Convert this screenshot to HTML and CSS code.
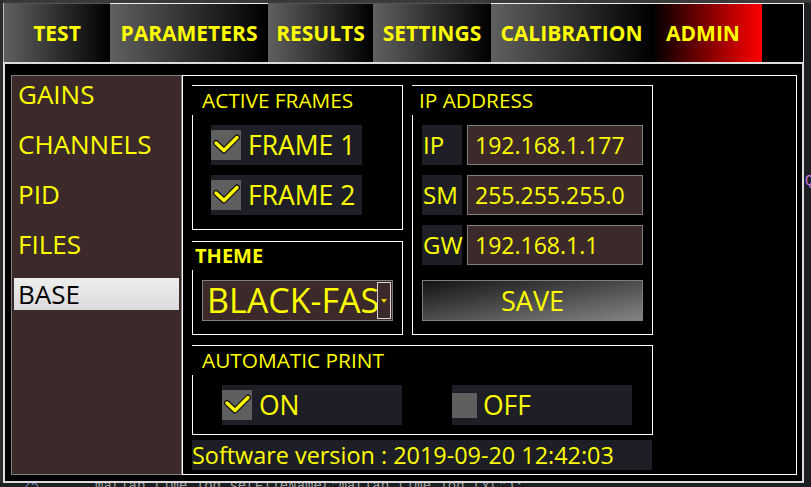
FILE: index.html
```html
<!DOCTYPE html>
<html lang="en">
<head>
    <meta charset="UTF-8">
    <meta name="viewport" content="width=device-width, initial-scale=1.0">
    <title>Settings - Base</title>
    <link rel="stylesheet" href="styles.css">
</head>
<body>
    <div class="desk">
        <div class="window">
            <div class="tabs">
                <div class="tab w-test">TEST</div>
                <div class="tab lit w-params">PARAMETERS</div>
                <div class="tab w-results">RESULTS</div>
                <div class="tab w-settings">SETTINGS</div>
                <div class="tab lit w-calib">CALIBRATION</div>
                <div class="tab tab-admin lit w-admin">ADMIN</div>
                <div class="tab-fill"></div>
            </div>

            <div class="frame">
                <ul class="menu">
                    <li>GAINS</li>
                    <li>CHANNELS</li>
                    <li>PID</li>
                    <li>FILES</li>
                    <li class="active">BASE</li>
                </ul>

                <div class="page">
                    <div class="grid">
                        <section class="group">
                            <div class="group-title">ACTIVE FRAMES</div>
                            <div class="frames">
                                <div class="check-row">
                                    <span class="box">
                                        <svg width="30" height="30" viewBox="0 0 30 30"><path class="tick-edge" d="M5 13 L13 20.5 L26 7.5"/><path class="tick" d="M5 13 L13 20.5 L26 7.5"/></svg>
                                    </span>
                                    <span>FRAME 1</span>
                                </div>
                                <div class="check-row">
                                    <span class="box">
                                        <svg width="30" height="30" viewBox="0 0 30 30"><path class="tick-edge" d="M5 13 L13 20.5 L26 7.5"/><path class="tick" d="M5 13 L13 20.5 L26 7.5"/></svg>
                                    </span>
                                    <span>FRAME 2</span>
                                </div>
                            </div>
                        </section>

                        <section class="group theme">
                            <div class="group-title">THEME</div>
                            <div class="select">
                                <span class="select-text">BLACK-FASHION</span>
                                <span class="select-btn"><span class="arrow"></span></span>
                            </div>
                        </section>

                        <section class="group ip">
                            <div class="group-title">IP ADDRESS</div>
                            <div class="ip-rows">
                                <div class="ip-row">
                                    <span class="ip-label">IP</span>
                                    <span class="ip-input">192.168.1.177</span>
                                </div>
                                <div class="ip-row">
                                    <span class="ip-label">SM</span>
                                    <span class="ip-input">255.255.255.0</span>
                                </div>
                                <div class="ip-row">
                                    <span class="ip-label">GW</span>
                                    <span class="ip-input">192.168.1.1</span>
                                </div>
                                <button class="save">SAVE</button>
                            </div>
                        </section>
                    </div>

                    <section class="group print">
                        <div class="group-title">AUTOMATIC PRINT</div>
                        <div class="print-rows">
                            <div class="check-row wide">
                                <span class="box">
                                    <svg width="30" height="30" viewBox="0 0 30 30"><path class="tick-edge" d="M5 13 L13 20.5 L26 7.5"/><path class="tick" d="M5 13 L13 20.5 L26 7.5"/></svg>
                                </span>
                                <span>ON</span>
                            </div>
                            <div class="check-row wide off">
                                <span class="box small"></span>
                                <span>OFF</span>
                            </div>
                        </div>
                    </section>

                    <div class="version">Software version : 2019-09-20 12:42:03</div>
                </div>
            </div>
        </div>
        <div class="side"><span>Q</span></div>
    </div>
    <div class="desk-line">
        <div class="code"><span class="ln">25</span>matlab_time_log.setFileName("matlab_time_log.txt");</div>
    </div>
</body>
</html>
```

FILE: styles.css
```css
* {
    box-sizing: border-box;
}
body {
    margin: 0;
    width: 811px;
    height: 487px;
    overflow: hidden;
    background: linear-gradient(#3a3a3a 3px, #1e1f25 3px);
    font-family: 'Open Sans', 'Noto Sans', sans-serif;
    color: #ffff00;
}
.desk {
    display: flex;
    padding: 3px 0 0 3px;
    background: linear-gradient(90deg, #2c2c2c 3px, transparent 3px);
}
.window {
    width: 801px;
    height: 480px;
    flex: none;
}
.side {
    flex: 1;
    padding: 170px 0 0 1px;
    font-family: 'Liberation Mono', monospace;
    font-size: 14px;
    color: #c678dd;
    overflow: hidden;
}

/* tab bar */
.tabs {
    display: flex;
    height: 59px;
    border-left: 1px solid #b8b8b8;
}
.tab {
    height: 59px;
    border-top: 1px solid #555;
    background: linear-gradient(90deg, #606060, #000);
    display: flex;
    align-items: center;
    justify-content: center;
    font-size: 21px;
    font-weight: 700;
    white-space: nowrap;
}
.tab.lit {
    border-top-color: #f0f0f0;
}
.tab-admin {
    background: linear-gradient(90deg, #000, #ff0000);
    padding-right: 8px;
}
.w-test { width: 106px; }
.w-params { width: 158px; }
.w-results { width: 105px; }
.w-settings { width: 118px; }
.w-calib { width: 161px; }
.w-admin { width: 110px; }
.tab-fill {
    flex: 1;
    background: #000;
    border-top: 1px solid #f0f0f0;
    border-right: 1px solid #f0f0f0;
}

/* main frame */
.frame {
    display: flex;
    height: 421px;
    background: #000;
    border: 2px solid #dcdcdc;
    padding: 11px 5px 6px 6px;
}
.menu {
    list-style: none;
    margin: 0;
    padding: 2px;
    width: 171px;
    height: 400px;
    background: #3c2a2a;
    border: 1px solid #808080;
}
.menu li {
    height: 32px;
    line-height: 32px;
    padding-left: 4px;
    margin-bottom: 18px;
    font-size: 26px;
}
.menu li.active {
    background: linear-gradient(#eeeeee, #dadada);
    color: #000;
}
.page {
    width: 615px;
    height: 400px;
    border: 1px solid #fff;
    padding: 9px;
}
.grid {
    display: grid;
    grid-template-columns: 211px 241px;
    grid-template-rows: 145px 94px;
    gap: 11px 9px;
}

/* group boxes */
.group {
    border: 1px solid #fff;
}
.group-title {
    margin-left: -1px;
    height: 29px;
    line-height: 29px;
    padding-left: 10px;
    background: #000;
    font-size: 20.8px;
    white-space: nowrap;
}
.frames {
    display: flex;
    flex-direction: column;
    gap: 10px;
    padding: 10px 0 0 18px;
}
.check-row {
    display: flex;
    align-items: center;
    gap: 7px;
    width: 151px;
    height: 40px;
    background: #1e1e26;
    font-size: 26.5px;
}
.check-row.wide {
    width: 180px;
}
.check-row.off {
    gap: 6px;
}
.box {
    width: 30px;
    height: 30px;
    flex: none;
    background: #5f5f5f;
}
.box svg {
    display: block;
}
.box.small {
    width: 25px;
    height: 25px;
}
.tick-edge {
    fill: none;
    stroke: #111;
    stroke-width: 6;
    stroke-linejoin: round;
    stroke-linecap: round;
}
.tick {
    fill: none;
    stroke: #ffff00;
    stroke-width: 3.5;
    stroke-linejoin: round;
    stroke-linecap: round;
}

/* theme */
.theme .group-title {
    height: 28px;
    line-height: 28px;
    padding-left: 3px;
    font-size: 20px;
    font-weight: 700;
}
.select {
    display: flex;
    align-items: center;
    width: 191px;
    height: 41px;
    margin: 10px 0 0 9px;
    padding-left: 4px;
    background: #3c2a2a;
    border: 1px solid #7f7f7f;
}
.select-text {
    flex: 1;
    overflow: hidden;
    white-space: nowrap;
    font-size: 34px;
    line-height: 39px;
}
.select-btn {
    width: 14px;
    height: 37px;
    margin-right: 1px;
    border: 1px solid #d8d8d8;
    display: flex;
    align-items: center;
    justify-content: center;
}
.arrow {
    width: 0;
    height: 0;
    border-left: 3px solid transparent;
    border-right: 3px solid transparent;
    border-top: 4px solid #e8d000;
}

/* ip address */
.ip {
    grid-column: 2;
    grid-row: 1 / span 2;
}
.ip .group-title {
    padding-left: 7px;
}
.ip-rows {
    display: flex;
    flex-direction: column;
    gap: 10px;
    padding: 10px 9px 0 9px;
}
.ip-row {
    display: flex;
    gap: 5px;
    height: 40px;
}
.ip-label {
    width: 40px;
    padding-left: 1px;
    background: #1e1e26;
    font-size: 24px;
    line-height: 40px;
}
.ip-input {
    flex: 1;
    padding-left: 7px;
    background: #3c2a2a;
    border: 1px solid #7f7f7f;
    font-size: 23px;
    line-height: 38px;
}
.save {
    margin-top: 5px;
    height: 41px;
    border: 1px solid #7f7f7f;
    background: linear-gradient(to bottom right, #141414, #848484);
    color: #ffff00;
    font-family: inherit;
    font-size: 27px;
    padding: 0;
}

/* automatic print */
.print {
    margin-top: 10px;
    width: 461px;
    height: 90px;
}
.print-rows {
    display: flex;
    gap: 50px;
    padding: 10px 0 0 29px;
}
.version {
    margin-top: 5px;
    width: 460px;
    height: 30px;
    line-height: 30px;
    background: #1e1e26;
    font-size: 23.4px;
    white-space: nowrap;
}

/* editor line behind the window */
.desk-line {
    height: 4px;
    overflow: hidden;
}
.code {
    margin-top: -4px;
    padding-left: 22px;
    font-family: 'Liberation Mono', monospace;
    font-size: 14px;
    line-height: 14px;
    color: #a0a0a0;
    white-space: nowrap;
}
.ln {
    display: inline-block;
    width: 73px;
    color: #6a73a8;
}
```
